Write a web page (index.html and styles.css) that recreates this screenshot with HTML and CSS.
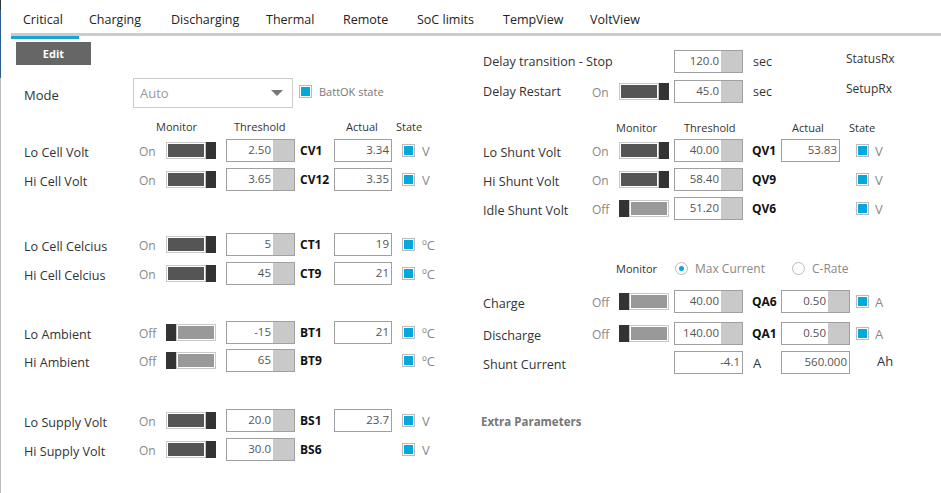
FILE: index.html
```html
<!DOCTYPE html>
<html>
<head>
<meta charset="utf-8">
<link rel="stylesheet" href="styles.css">
</head>
<body>
<div class="app">
  <div class="edge"></div>
  <div class="main">
    <nav class="tabs">
      <span class="tab active w-critical">Critical</span>
      <span class="tab w-charging">Charging</span>
      <span class="tab w-discharging">Discharging</span>
      <span class="tab w-thermal">Thermal</span>
      <span class="tab w-remote">Remote</span>
      <span class="tab w-soc">SoC limits</span>
      <span class="tab w-temp">TempView</span>
      <span class="tab w-volt">VoltView</span>
    </nav>
    <div class="content">
      <section class="col-left">
        <div class="edit-wrap"><button class="edit">Edit</button></div>
        <div class="mode-row">
          <span class="mode-label">Mode</span>
          <div class="select"><span class="select-text">Auto</span><span class="caret"></span></div>
          <span class="check"></span>
          <span class="batt">BattOK state</span>
        </div>
        <div class="hdr hdr-left">
          <span class="h-mon">Monitor</span><span class="h-thr">Threshold</span><span class="h-act">Actual</span><span class="h-state">State</span>
        </div>

        <div class="group g1">
          <div class="lrow">
            <span class="lbl">Lo Cell Volt</span><span class="onoff">On</span>
            <span class="tg on"><span class="fill"></span><span class="thumb"></span></span>
            <span class="num"><span class="val">2.50</span><span class="spin"></span></span>
            <span class="code">CV1</span>
            <span class="num act"><span class="val">3.34</span></span>
            <span class="check"></span><span class="unit">V</span>
          </div>
          <div class="lrow">
            <span class="lbl">Hi Cell Volt</span><span class="onoff">On</span>
            <span class="tg on"><span class="fill"></span><span class="thumb"></span></span>
            <span class="num"><span class="val">3.65</span><span class="spin"></span></span>
            <span class="code">CV12</span>
            <span class="num act"><span class="val">3.35</span></span>
            <span class="check"></span><span class="unit">V</span>
          </div>
        </div>

        <div class="group g2">
          <div class="lrow">
            <span class="lbl">Lo Cell Celcius</span><span class="onoff">On</span>
            <span class="tg on"><span class="fill"></span><span class="thumb"></span></span>
            <span class="num"><span class="val">5</span><span class="spin"></span></span>
            <span class="code">CT1</span>
            <span class="num act"><span class="val">19</span></span>
            <span class="check"></span><span class="unit">ºC</span>
          </div>
          <div class="lrow">
            <span class="lbl">Hi Cell Celcius</span><span class="onoff">On</span>
            <span class="tg on"><span class="fill"></span><span class="thumb"></span></span>
            <span class="num"><span class="val">45</span><span class="spin"></span></span>
            <span class="code">CT9</span>
            <span class="num act"><span class="val">21</span></span>
            <span class="check"></span><span class="unit">ºC</span>
          </div>
        </div>

        <div class="group g3">
          <div class="lrow">
            <span class="lbl">Lo Ambient</span><span class="onoff">Off</span>
            <span class="tg off"><span class="thumb"></span><span class="fill"></span></span>
            <span class="num"><span class="val">-15</span><span class="spin"></span></span>
            <span class="code">BT1</span>
            <span class="num act"><span class="val">21</span></span>
            <span class="check"></span><span class="unit">ºC</span>
          </div>
          <div class="lrow">
            <span class="lbl">Hi Ambient</span><span class="onoff">Off</span>
            <span class="tg off"><span class="thumb"></span><span class="fill"></span></span>
            <span class="num"><span class="val">65</span><span class="spin"></span></span>
            <span class="code">BT9</span>
            <span class="blank"></span>
            <span class="check"></span><span class="unit">ºC</span>
          </div>
        </div>

        <div class="group g4">
          <div class="lrow">
            <span class="lbl">Lo Supply Volt</span><span class="onoff">On</span>
            <span class="tg on"><span class="fill"></span><span class="thumb"></span></span>
            <span class="num"><span class="val">20.0</span><span class="spin"></span></span>
            <span class="code">BS1</span>
            <span class="num act"><span class="val">23.7</span></span>
            <span class="check"></span><span class="unit">V</span>
          </div>
          <div class="lrow">
            <span class="lbl">Hi Supply Volt</span><span class="onoff">On</span>
            <span class="tg on"><span class="fill"></span><span class="thumb"></span></span>
            <span class="num"><span class="val">30.0</span><span class="spin"></span></span>
            <span class="code">BS6</span>
            <span class="blank"></span>
            <span class="check"></span><span class="unit">V</span>
          </div>
        </div>
      </section>

      <section class="col-right">
        <div class="drow d1">
          <span class="lbl span3">Delay transition - Stop</span>
          <span class="num"><span class="val">120.0</span><span class="spin"></span></span>
          <span class="sec">sec</span>
          <span class="rx">StatusRx</span>
        </div>
        <div class="drow d2">
          <span class="lbl">Delay Restart</span><span class="onoff">On</span>
          <span class="tg on"><span class="fill"></span><span class="thumb"></span></span>
          <span class="num"><span class="val">45.0</span><span class="spin"></span></span>
          <span class="sec">sec</span>
          <span class="rx">SetupRx</span>
        </div>

        <div class="hdr hdr-right">
          <span class="hr-mon">Monitor</span><span class="hr-thr">Threshold</span><span class="hr-act">Actual</span><span class="h-state">State</span>
        </div>

        <div class="group r1">
          <div class="rrow">
            <span class="lbl">Lo Shunt Volt</span><span class="onoff">On</span>
            <span class="tg on"><span class="fill"></span><span class="thumb"></span></span>
            <span class="num"><span class="val">40.00</span><span class="spin"></span></span>
            <span class="code">QV1</span>
            <span class="num act-r"><span class="val">53.83</span></span>
            <span class="check"></span><span class="unit">V</span>
          </div>
          <div class="rrow">
            <span class="lbl">Hi Shunt Volt</span><span class="onoff">On</span>
            <span class="tg on"><span class="fill"></span><span class="thumb"></span></span>
            <span class="num"><span class="val">58.40</span><span class="spin"></span></span>
            <span class="code">QV9</span>
            <span class="blank"></span>
            <span class="check"></span><span class="unit">V</span>
          </div>
          <div class="rrow">
            <span class="lbl">Idle Shunt Volt</span><span class="onoff">Off</span>
            <span class="tg off"><span class="thumb"></span><span class="fill"></span></span>
            <span class="num"><span class="val">51.20</span><span class="spin"></span></span>
            <span class="code">QV6</span>
            <span class="blank"></span>
            <span class="check"></span><span class="unit">V</span>
          </div>
        </div>

        <div class="radio-row">
          <span class="hr-mon2">Monitor</span>
          <span class="radio-opt w-max"><span class="radio sel"></span><span>Max Current</span></span>
          <span class="radio-opt"><span class="radio"></span><span>C-Rate</span></span>
        </div>

        <div class="group r2">
          <div class="rrow">
            <span class="lbl">Charge</span><span class="onoff">Off</span>
            <span class="tg off"><span class="thumb"></span><span class="fill"></span></span>
            <span class="num"><span class="val">40.00</span><span class="spin"></span></span>
            <span class="code">QA6</span>
            <span class="num"><span class="val">0.50</span><span class="spin"></span></span>
            <span class="check"></span><span class="unit">A</span>
          </div>
          <div class="rrow gap9">
            <span class="lbl">Discharge</span><span class="onoff">Off</span>
            <span class="tg off"><span class="thumb"></span><span class="fill"></span></span>
            <span class="num"><span class="val">140.00</span><span class="spin"></span></span>
            <span class="code">QA1</span>
            <span class="num"><span class="val">0.50</span><span class="spin"></span></span>
            <span class="check"></span><span class="unit">A</span>
          </div>
          <div class="rrow shunt">
            <span class="lbl span3">Shunt Current</span>
            <span class="num"><span class="val">-4.1</span></span>
            <span class="unit-a">A</span>
            <span class="num"><span class="val">560.000</span></span>
            <span class="ah">Ah</span>
          </div>
        </div>

        <div class="extra">Extra Parameters</div>
      </section>
    </div>
  </div>
</div>
</body>
</html>
```

FILE: styles.css
```css
* { box-sizing: border-box; }
html, body { margin: 0; padding: 0; background: #fff; }
body {
  font-family: "Open Sans", "Noto Sans", "DejaVu Sans", sans-serif;
  font-size: 12.5px;
  color: #333;
}
.app { display: flex; width: 941px; height: 493px; overflow: hidden; }
.edge {
  width: 1px; flex: none;
  background: linear-gradient(#333 0, #333 10px, #2f5f8f 10px, #2f5f8f 78px, #bdbdbd 78px);
}
.main { flex: 1; display: flex; flex-direction: column; }

/* tabs */
.tabs {
  display: flex; margin-left: 10px; height: 36px;
  border-bottom: 3px solid #cbcbcb;
}
.tab {
  height: 36px; padding: 3px 0 0 12px; display: flex; align-items: center;
  font-size: 12.5px; color: #222; white-space: nowrap; position: relative;
}
.tab.active::after {
  content: ""; position: absolute; left: 0; bottom: -3px; width: 68px; height: 3px;
  background: #19a4d8;
}
.w-critical { width: 66px; }
.w-charging { width: 82px; }
.w-discharging { width: 95px; }
.w-thermal { width: 77px; }
.w-remote { width: 74px; }
.w-soc { width: 86px; }
.w-temp { width: 87px; }
.w-volt { width: 90px; }

.content { display: flex; }
.col-left { width: 482px; flex: none; }
.col-right { flex: 1; }

/* edit + mode */
.edit-wrap { padding: 6px 0 0 15px; }
.edit {
  display: block; width: 75px; height: 23px; border: 0; margin: 0;
  background: #666; color: #fff; font-family: inherit; font-weight: 700; font-size: 11px;
}
.mode-row { display: flex; align-items: center; margin-top: 13px; height: 30px; padding-left: 23px; }
.mode-label { width: 109px; font-size: 13px; padding-top: 3px; color: #333; }
.select {
  width: 160px; height: 30px; border: 1px solid #ccc; display: flex; align-items: center;
  padding: 0 9px 0 6px; justify-content: space-between;
}
.select-text { color: #999; font-size: 13px; }
.caret { width: 0; height: 0; border-left: 6px solid transparent; border-right: 6px solid transparent; border-top: 6px solid #777; }
.mode-row .check { margin-left: 6px; margin-top: -3px; }
.batt { margin-left: 7px; color: #777; font-size: 11px; margin-top: -3px; }

/* headers */
.hdr { display: flex; height: 16px; align-items: center; font-size: 11px; color: #333; }
.hdr-left { margin-top: 10px; padding-left: 155px; }
.h-mon { width: 78px; }
.h-thr { width: 112px; }
.h-act { width: 50px; }
.hdr-right { margin-top: 16px; padding-left: 133px; }
.hr-mon { width: 68px; }
.hr-thr { width: 108px; }
.hr-act { width: 57px; }

/* groups */
.group { display: flex; flex-direction: column; gap: 6px; }
.g1 { margin-top: 5px; }
.g2 { margin-top: 42px; }
.g3 { margin-top: 36px; gap: 5px; }
.g4 { margin-top: 37px; }

.lrow, .rrow, .drow { display: grid; align-items: center; height: 23px; }
.lrow { grid-template-columns: 115px 27px 60px 74px 34px 68px 20px auto; padding-left: 23px; }
.rrow { grid-template-columns: 109px 27px 55px 78px 29px 75px 19px auto; }

.lbl { font-size: 12.6px; color: #333; white-space: nowrap; padding-top: 3px; }
.onoff { font-size: 12px; color: #888; padding-top: 1px; }
.code { font-weight: 700; font-size: 12px; color: #111; padding-bottom: 1px; }
.unit { font-size: 13px; color: #888; }
.blank { display: block; }
.span3 { grid-column: 1 / 4; }

/* toggle */
.tg { display: flex; width: 50px; height: 17px; }
.tg .thumb { width: 10px; background: #333; flex: none; }
.tg .fill { flex: 1; border: 1px solid #c8c8c8; padding: 1px; background: #555; background-clip: content-box; }
.tg.off .fill { background: #999; background-clip: content-box; }

/* numeric inputs */
.num { display: flex; width: 69px; height: 23px; border: 1px solid #a0a0a0; background: #fff; }
.num .val { flex: 1; text-align: right; padding-right: 2px; color: #555; font-size: 11.5px; line-height: 20px; }
.num .spin { width: 21px; background: #c9c9c9; flex: none; }
.num.act { width: 58px; }
.num.act-r { width: 59px; }

/* checkbox */
.check {
  display: block; width: 13px; height: 13px; border: 1px solid #bbb; padding: 1px;
  background: #03a9dd; background-clip: content-box; flex: none;
}

/* right column */
.d1 { margin-top: 14px; }
.d2 { margin-top: 7px; }
.drow { grid-template-columns: 109px 27px 55px 78px 94px auto; }
.drow .lbl { padding-top: 0; }
.sec { font-size: 12.5px; color: #333; padding-left: 1px; }
.rx { font-size: 12px; color: #333; align-self: start; margin-top: 0; }

.r1 { margin-top: 4px; }
.radio-row { display: flex; align-items: center; height: 16px; margin-top: 40px; padding-left: 133px; font-size: 12px; color: #888; }
.hr-mon2 { width: 59px; color: #333; font-size: 11px; }
.radio-opt { display: flex; align-items: center; gap: 7px; }
.w-max { width: 117px; }
.radio { width: 13px; height: 13px; border: 1px solid #bbb; border-radius: 50%; display: flex; align-items: center; justify-content: center; }
.radio.sel::after { content: ""; width: 5px; height: 5px; border-radius: 50%; background: #03a9dd; }

.r2 { margin-top: 14px; }
.gap9 { margin-top: 3px; }
.shunt { grid-template-columns: 109px 27px 55px 78px 29px 96px auto; }
.shunt .unit-a { font-size: 13px; color: #333; padding-left: 1px; }
.ah { font-size: 13px; color: #333; padding-bottom: 4px; }

.extra { margin-top: 40px; margin-left: -2px; font-weight: 700; color: #777; font-size: 11.5px; }
```
